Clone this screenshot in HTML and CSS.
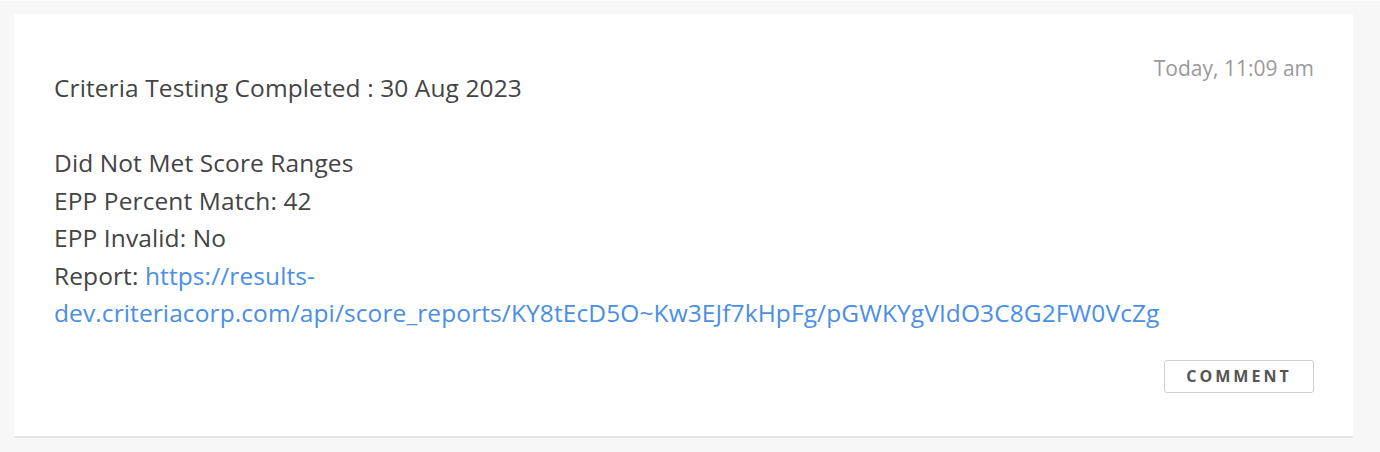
FILE: index.html
```html
<!DOCTYPE html>
<html lang="en">
<head>
    <meta charset="UTF-8">
    <meta name="viewport" content="width=device-width, initial-scale=1.0">
    <link rel="stylesheet" href="styles.css">
</head>
<body>
    <div class="feed">
        <!-- single activity note -->
        <div class="note">
            <div class="note-head">
                <p class="note-title">Criteria Testing Completed : 30 Aug 2023</p>
                <span class="note-time">Today, 11:09 am</span>
            </div>
            <div class="note-body">
                <p>Did Not Met Score Ranges</p>
                <p>EPP Percent Match: 42</p>
                <p>EPP Invalid: No</p>
                <p>Report: <a href="#">https://results-dev.criteriacorp.com/api/score_reports/KY8tEcD5O~Kw3EJf7kHpFg/pGWKYgVIdO3C8G2FW0VcZg</a></p>
            </div>
            <div class="note-actions">
                <button class="btn-comment">Comment</button>
            </div>
        </div>
    </div>
</body>
</html>
```

FILE: styles.css
```css
* {
    box-sizing: border-box;
    margin: 0;
    padding: 0;
}

body {
    background-color: #f7f7f7;
    font-family: "Open Sans", "Noto Sans", sans-serif;
    color: #444;
}

.feed {
    padding: 13px 27px 14px 14px;
    border-top: 1px solid #fcfcfc;
}

.note {
    background-color: white;
    border-bottom: 2px solid #e6e6e6;
    padding: 52px 39px 43px 40px;
}

.note-head {
    display: flex;
    justify-content: space-between;
    align-items: flex-start;
}

.note-title {
    font-size: 24.5px;
    letter-spacing: 0.1px;
    line-height: 37px;
    margin-top: 3px;
    margin-bottom: 2px;
}

.note-time {
    font-size: 21px;
    line-height: 30px;
    color: #9a9a9a;
    margin-top: -13px;
}

.note-body {
    margin-top: 36px;
    font-size: 24.5px;
    letter-spacing: 0.1px;
    line-height: 37.5px;
}

.note-body a {
    color: #4a8ee6;
    text-decoration: none;
}

.note-actions {
    display: flex;
    justify-content: flex-end;
    margin-top: 28px;
}

.btn-comment {
    width: 150px;
    height: 33px;
    background-color: white;
    border: 1px solid #d0d0d0;
    border-radius: 3px;
    font-family: "Open Sans", sans-serif;
    font-size: 16px;
    font-weight: 700;
    letter-spacing: 3px;
    text-transform: uppercase;
    color: #555;
}
```
